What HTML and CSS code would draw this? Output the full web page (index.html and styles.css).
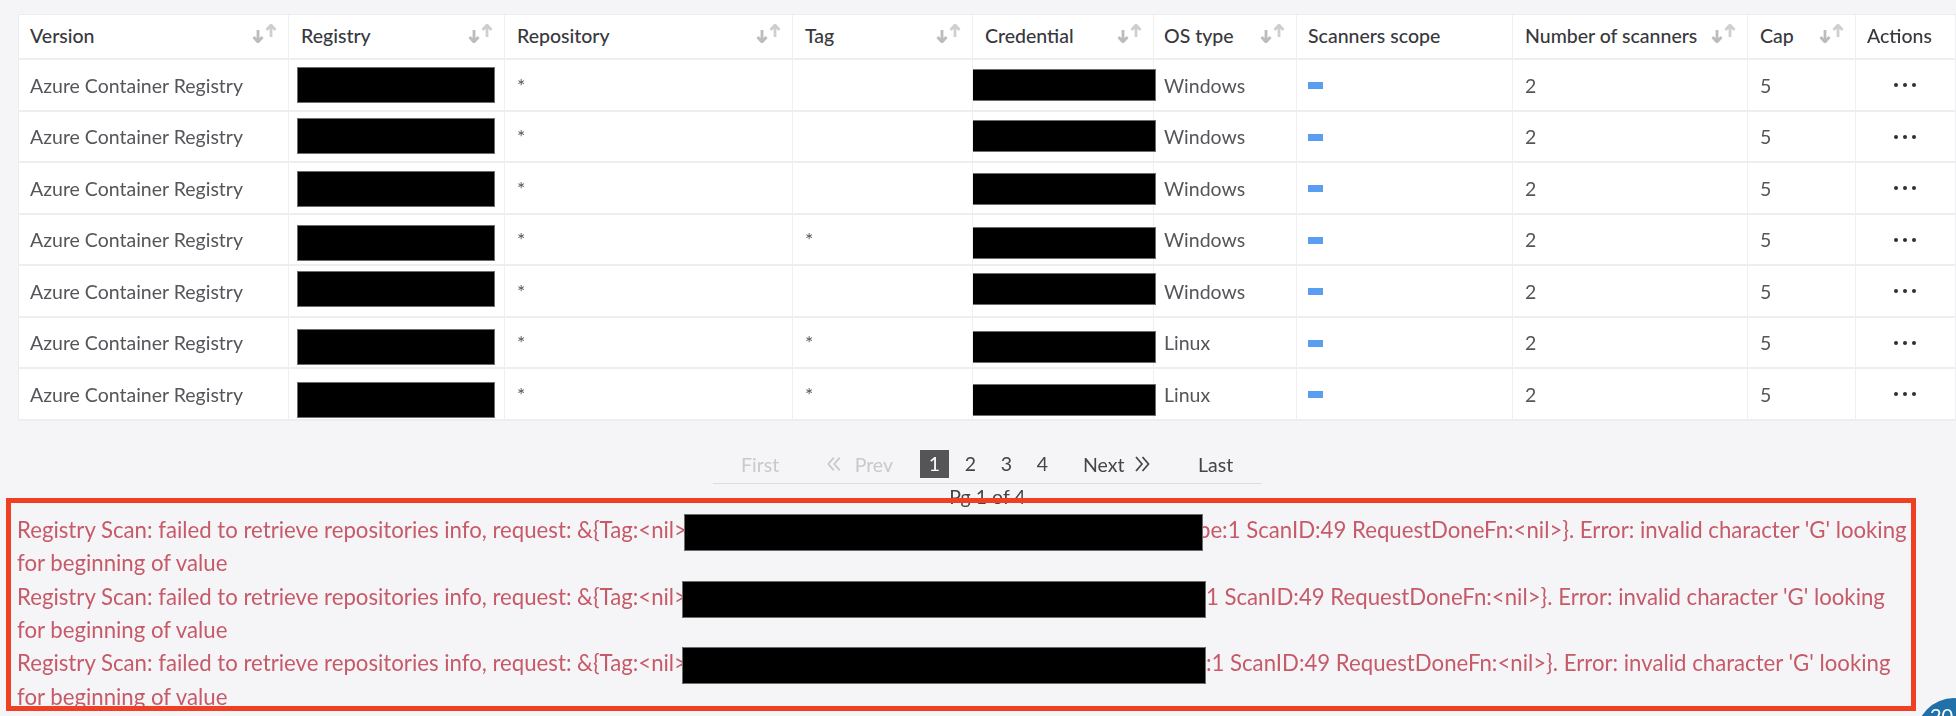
FILE: index.html
```html
<!DOCTYPE html>
<html lang="en">
<head>
<meta charset="utf-8">
<title>Registry scan settings</title>
<link rel="stylesheet" href="styles.css">
</head>
<body>
<svg class="defs" width="0" height="0" aria-hidden="true">
  <symbol id="sort" viewBox="0 0 26 19">
    <path class="sort-down" d="M6 6v12M1.5 13l4.5 5 4.5-5"/>
    <path class="sort-up" d="M19 13V1M14.5 6L19 1l4.5 5"/>
  </symbol>
  <symbol id="chev-l" viewBox="0 0 15 16">
    <path d="M7.5 1L1.5 8l6 7M14 1L8 8l6 7"/>
  </symbol>
  <symbol id="chev-r" viewBox="0 0 15 16">
    <path d="M1 1l6 7-6 7M7.5 1l6 7-6 7"/>
  </symbol>
</svg>
<main class="page">
  <table class="grid">
    <colgroup>
      <col class="c-version"><col class="c-registry"><col class="c-repo"><col class="c-tag"><col class="c-cred"><col class="c-os"><col class="c-scope"><col class="c-num"><col class="c-cap"><col class="c-actions">
    </colgroup>
    <thead>
      <tr>
        <th><div class="th"><span>Version</span><svg class="sort"><use href="#sort"/></svg></div></th>
        <th><div class="th"><span>Registry</span><svg class="sort"><use href="#sort"/></svg></div></th>
        <th><div class="th"><span>Repository</span><svg class="sort"><use href="#sort"/></svg></div></th>
        <th><div class="th"><span>Tag</span><svg class="sort"><use href="#sort"/></svg></div></th>
        <th><div class="th"><span>Credential</span><svg class="sort"><use href="#sort"/></svg></div></th>
        <th><div class="th"><span>OS type</span><svg class="sort"><use href="#sort"/></svg></div></th>
        <th><div class="th"><span>Scanners scope</span></div></th>
        <th><div class="th"><span>Number of scanners</span><svg class="sort"><use href="#sort"/></svg></div></th>
        <th><div class="th"><span>Cap</span><svg class="sort"><use href="#sort"/></svg></div></th>
        <th><div class="th"><span>Actions</span></div></th>
      </tr>
    </thead>
    <tbody>
      <tr><td>Azure Container Registry</td><td class="cell-r"><i class="black reg"></i></td><td class="star">*</td><td class="star"></td><td class="cell-r"><i class="black cred"></i></td><td>Windows</td><td><i class="scope"></i></td><td>2</td><td>5</td><td><div class="dots"><i></i><i></i><i></i></div></td></tr>
      <tr><td>Azure Container Registry</td><td class="cell-r"><i class="black reg"></i></td><td class="star">*</td><td class="star"></td><td class="cell-r"><i class="black cred"></i></td><td>Windows</td><td><i class="scope"></i></td><td>2</td><td>5</td><td><div class="dots"><i></i><i></i><i></i></div></td></tr>
      <tr><td>Azure Container Registry</td><td class="cell-r"><i class="black reg"></i></td><td class="star">*</td><td class="star"></td><td class="cell-r"><i class="black cred"></i></td><td>Windows</td><td><i class="scope"></i></td><td>2</td><td>5</td><td><div class="dots"><i></i><i></i><i></i></div></td></tr>
      <tr><td>Azure Container Registry</td><td class="cell-r"><i class="black reg"></i></td><td class="star">*</td><td class="star">*</td><td class="cell-r"><i class="black cred"></i></td><td>Windows</td><td><i class="scope"></i></td><td>2</td><td>5</td><td><div class="dots"><i></i><i></i><i></i></div></td></tr>
      <tr><td>Azure Container Registry</td><td class="cell-r"><i class="black reg"></i></td><td class="star">*</td><td class="star"></td><td class="cell-r"><i class="black cred"></i></td><td>Windows</td><td><i class="scope"></i></td><td>2</td><td>5</td><td><div class="dots"><i></i><i></i><i></i></div></td></tr>
      <tr><td>Azure Container Registry</td><td class="cell-r"><i class="black reg"></i></td><td class="star">*</td><td class="star">*</td><td class="cell-r"><i class="black cred"></i></td><td>Linux</td><td><i class="scope"></i></td><td>2</td><td>5</td><td><div class="dots"><i></i><i></i><i></i></div></td></tr>
      <tr><td>Azure Container Registry</td><td class="cell-r"><i class="black reg"></i></td><td class="star">*</td><td class="star">*</td><td class="cell-r"><i class="black cred"></i></td><td>Linux</td><td><i class="scope"></i></td><td>2</td><td>5</td><td><div class="dots"><i></i><i></i><i></i></div></td></tr>
    </tbody>
  </table>

  <nav class="pager">
    <div class="pager-row">
      <span class="pg off first">First</span>
      <span class="pg off prev"><svg class="chev"><use href="#chev-l"/></svg>Prev</span>
      <div class="pages">
        <span class="num on">1</span><span class="num">2</span><span class="num">3</span><span class="num">4</span>
      </div>
      <span class="pg next">Next<svg class="chev"><use href="#chev-r"/></svg></span>
      <span class="pg last">Last</span>
    </div>
    <div class="pg-info">Pg 1 of 4</div>
  </nav>

  <section class="errors">
    <p class="err">Registry Scan: failed to retrieve repositories info, request: &amp;{Tag:&lt;nil&gt;<i class="black e1"></i>pe:1 ScanID:49 RequestDoneFn:&lt;nil&gt;}. Error: invalid character 'G' looking<br>for beginning of value</p>
    <p class="err">Registry Scan: failed to retrieve repositories info, request: &amp;{Tag:&lt;nil&gt;<i class="black e2"></i>1 ScanID:49 RequestDoneFn:&lt;nil&gt;}. Error: invalid character 'G' looking<br>for beginning of value</p>
    <p class="err">Registry Scan: failed to retrieve repositories info, request: &amp;{Tag:&lt;nil&gt;<i class="black e3"></i>:1 ScanID:49 RequestDoneFn:&lt;nil&gt;}. Error: invalid character 'G' looking<br>for beginning of value</p>
  </section>
</main>
<div class="annotation"></div>
<div class="bubble">20</div>
</body>
</html>
```

FILE: styles.css
```css
* { box-sizing: border-box; }
html, body { margin: 0; height: 716px; overflow: hidden; }
body {
  background: #f5f5f8;
  font-family: Lato, "Open Sans", sans-serif;
  font-size: 19.5px;
  color: #55555a;
}
.defs { position: absolute; }
.page { padding: 14px 0 0 18px; filter: blur(0.35px); }

.grid {
  width: 1938px;
  table-layout: fixed;
  border-collapse: separate;
  border-spacing: 0;
  background: #fff;
  border-top: 1px solid #ececef;
}
.c-version { width: 271px; }
.c-registry { width: 216px; }
.c-repo { width: 288px; }
.c-tag { width: 180px; }
.c-cred { width: 181px; }
.c-os { width: 143px; }
.c-scope { width: 216px; }
.c-num { width: 235px; }
.c-cap { width: 108px; }
.c-actions { width: 100px; }

.grid th, .grid td {
  border-right: 1px solid #efeff1;
  border-bottom: 2px solid #eeeef0;
  padding: 0 0 0 12px;
  text-align: left;
  font-weight: 400;
}
.grid th { padding-bottom: 2px; }
.grid th:first-child, .grid td:first-child { border-left: 1px solid #ececef; padding-left: 11px; }
.grid th:nth-child(6), .grid td:nth-child(6) { padding-left: 10px; }
.grid th:nth-child(7), .grid td:nth-child(7),
.grid th:nth-child(10), .grid td:nth-child(10) { padding-left: 11px; }
.grid thead tr { height: 45px; }
.grid tbody tr { height: 51px; }
.grid tbody tr:nth-child(odd) { height: 52px; }
.th {
  display: flex;
  align-items: center;
  justify-content: space-between;
  padding-right: 10px;
  color: #38383d;
  font-weight: 500;
}
.sort { width: 26px; height: 19px; flex: none; margin-top: -5px; }
.sort-down, .sort-up { fill: none; stroke-width: 2.8; }
.sort-down { stroke: #bcbcbf; }
.sort-up { stroke: #cfcfd3; }

.star { vertical-align: middle; }
.cell-r { position: relative; }
.black {
  position: absolute;
  display: block;
  background: #000;
  border: 1px solid #6d6d6d;
}
.reg { left: 8px; width: 198px; height: 36px; }
.cred { left: 0; width: 183px; height: 32px; border-left: 0; z-index: 1; }
tbody tr:nth-child(1) .reg { top: 7px; }
tbody tr:nth-child(2) .reg { top: 6px; }
tbody tr:nth-child(3) .reg { top: 8px; }
tbody tr:nth-child(4) .reg { top: 10px; }
tbody tr:nth-child(5) .reg { top: 5px; }
tbody tr:nth-child(6) .reg { top: 11px; }
tbody tr:nth-child(7) .reg { top: 13px; }
tbody tr:nth-child(1) .cred { top: 9px; }
tbody tr:nth-child(2) .cred { top: 8px; }
tbody tr:nth-child(3) .cred { top: 10px; }
tbody tr:nth-child(4) .cred { top: 12px; }
tbody tr:nth-child(5) .cred { top: 7px; }
tbody tr:nth-child(6) .cred { top: 13px; }
tbody tr:nth-child(7) .cred { top: 15px; }

.scope { display: block; width: 15px; height: 7px; margin-top: 1px; background: #5a9ef2; }
.dots { display: flex; justify-content: center; gap: 5px; margin-left: -12px; }
.dots i { width: 4px; height: 4px; border-radius: 50%; background: #2e2e33; }

.pager { width: 549px; margin: 29px 0 0 695px; }
.pager-row {
  display: flex;
  align-items: center;
  height: 34px;
  padding: 0 0 5px 28px;
  border-bottom: 1px solid #dcdcde;
  color: #444449;
}
.off { color: #c9c9cb; }
.chev { width: 15px; height: 16px; fill: none; stroke: currentColor; stroke-width: 1.7; }
.off .chev { stroke-width: 2; }
.first { width: 38px; }
.prev { margin-left: 48px; display: flex; gap: 14px; align-items: center; width: 66px; }
.next { margin-left: 26px; display: flex; gap: 11px; align-items: center; width: 68px; }
.last { margin-left: 47px; }
.pages { display: flex; gap: 7px; margin-left: 27px; }
.num { width: 29px; height: 28px; line-height: 28px; text-align: center; }
.num.on { background: #555558; color: #fff; }
.pg-info { text-align: center; height: 29px; line-height: 25px; color: #444449; }

.errors { color: #c65a68; font-size: 22.2px; line-height: 33.33px; margin-left: -1px; white-space: nowrap; }
.err { margin: 0; }
.errors .black {
  position: relative;
  z-index: 1;
  display: inline-block;
  height: 37px;
  margin-top: -6px;
  margin-bottom: -6px;
  vertical-align: middle;
}
.e1 { width: 519px; margin-left: -3px; margin-right: -5px; }
.e2 { width: 524px; margin-left: -5px; }
.e3 { width: 524px; margin-left: -5px; }

.annotation {
  position: absolute;
  left: 6px;
  top: 498px;
  width: 1910px;
  height: 213px;
  border: 5px solid #f04023;
}
.bubble {
  position: absolute;
  left: 1916px;
  top: 698px;
  width: 76px;
  height: 76px;
  border-radius: 50%;
  background: #2170a8;
  color: #fff;
  font-size: 20px;
  line-height: 24px;
  padding: 5px 0 0 14px;
}
```
